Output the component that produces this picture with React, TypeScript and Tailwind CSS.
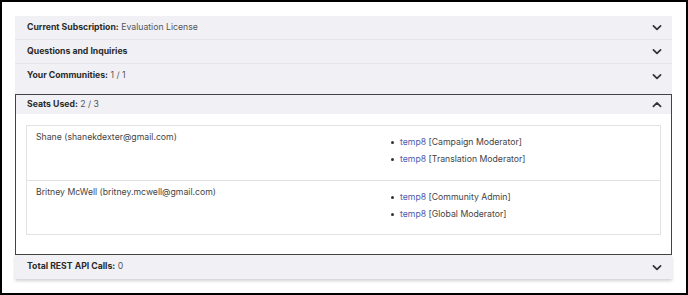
import React from 'react'

const Chevron = ({ up = false }: { up?: boolean }) => (
    <svg width="10" height="7" viewBox="0 0 10 7" className="text-[#333]">
        {up ?
            <path d="M1.4 5.4 L5 1.8 L8.6 5.4" fill="none" stroke="currentColor" strokeWidth="1.7" strokeLinecap="round" strokeLinejoin="round" /> :
            <path d="M1.4 1.8 L5 5.4 L8.6 1.8" fill="none" stroke="currentColor" strokeWidth="1.7" strokeLinecap="round" strokeLinejoin="round" />}
    </svg>
)

const Row: React.FC<{ label: string; value?: string; last?: boolean }> = ({ label, value, last }) => (
    <div className={`flex h-[24px] items-center justify-between bg-[#f1f1f5] pl-[12px] pr-[10px] ${last ? 'shadow-[0_2px_3px_rgba(0,0,0,0.18)]' : 'border-b border-[#e6e6ea]'}`}>
        <div className="text-[8.7px] text-[#555]">
            <span className="font-bold text-[#2b2b2b]">{label}</span>{value && <> {value}</>}
        </div>
        <Chevron />
    </div>
)

const seats = [
    { name: 'Shane (shanekdexter@gmail.com)', roles: ['Campaign Moderator', 'Translation Moderator'] },
    { name: 'Britney McWell (britney.mcwell@gmail.com)', roles: ['Community Admin', 'Global Moderator'] },
]

const App: React.FC = () => {
    return (
        <div className="h-[295px] w-[688px] border-2 border-black bg-white pl-[13px] pr-[14px] pt-[14px]" style={{ fontFamily: 'Inter, "Liberation Sans", sans-serif' }}>
            <Row label="Current Subscription:" value="Evaluation License" />
            <Row label="Questions and Inquiries" />
            <div className="bg-[#f1f1f5] pb-[6px]">
                <div className="flex h-[24px] items-center justify-between pl-[12px] pr-[10px]">
                    <div className="text-[8.7px] text-[#555]"><span className="font-bold text-[#2b2b2b]">Your Communities:</span> 1 / 1</div>
                    <Chevron />
                </div>
            </div>
            <div className="border border-[#444] bg-white">
                <div className="flex h-[19px] items-center justify-between bg-[#f1f1f5] pl-[11px] pr-[9px]">
                    <div className="text-[8.7px] text-[#555]"><span className="font-bold text-[#2b2b2b]">Seats Used:</span> 2 / 3</div>
                    <Chevron up />
                </div>
                <div className="px-[10px] pb-[19px] pt-[11px]">
                    <div className="border border-[#e2e2e6]">
                        {seats.map((s, i) => (
                            <div key={s.name} className={`grid h-[54px] grid-cols-[355px_1fr] pt-[6px] text-[8.7px] leading-[11px] text-[#444] ${i > 0 ? 'border-t border-[#e2e2e6]' : ''}`}>
                                <div className="pl-[9px]">{s.name}</div>
                                <ul className="mt-[5px] flex flex-col gap-[6px] pl-[9px]">
                                    {s.roles.map(r => (
                                        <li key={r} className="flex items-center">
                                            <span className="mr-[6px] h-[3px] w-[3px] rounded-full bg-[#333]"></span>
                                            <span className="text-[#4b5bb0]">temp8</span>&nbsp;[{r}]
                                        </li>
                                    ))}
                                </ul>
                            </div>
                        ))}
                    </div>
                </div>
            </div>
            <Row label="Total REST API Calls:" value="0" last />
        </div>
    )
}

export default App
